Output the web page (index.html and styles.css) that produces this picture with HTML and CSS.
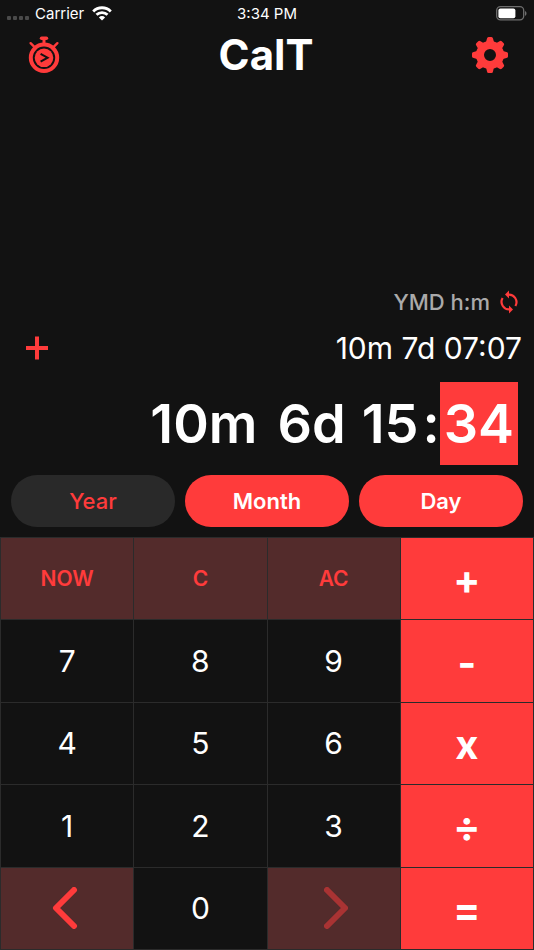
FILE: index.html
```html
<!DOCTYPE html>
<html lang="en">
<head>
  <meta charset="UTF-8">
  <title>CalT</title>
  <meta name="viewport" content="width=device-width, initial-scale=1.0">
  <link rel="stylesheet" href="styles.css">
</head>
<body>
  <!-- status bar -->
  <div class="status-bar">
    <div class="status-left">
      <span class="signal"><i></i><i></i><i></i><i></i></span>
      <span>Carrier</span>
      <svg class="wifi" viewBox="0 0 20 16" width="20" height="16" fill="none" stroke="#fff" stroke-width="2.8">
        <path d="M1.2 6.4a12.4 12.4 0 0 1 17.6 0"/>
        <path d="M4.5 9.8a7.8 7.8 0 0 1 11 0"/>
        <path d="M10 15.4L6.9 12.4a4.4 4.4 0 0 1 6.2 0z" fill="#fff" stroke="none"/>
      </svg>
    </div>
    <span>3:34 PM</span>
    <div class="status-right">
      <svg viewBox="0 0 31 15" width="31" height="15">
        <rect x="0.7" y="0.7" width="27" height="13.2" rx="3.8" fill="none" stroke="#6e6e6e" stroke-width="1.3"/>
        <rect x="2.4" y="2.4" width="17" height="9.8" rx="2" fill="#fff"/>
        <path d="M29 5v4.8c2-.8 2-4 0-4.8z" fill="#6e6e6e"/>
      </svg>
    </div>
  </div>

  <header class="header">
    <button class="icon-btn" aria-label="Stopwatch">
      <svg viewBox="0 0 32 38" width="32" height="38" fill="none" stroke="#ff3b3b">
        <path d="M16 3v5" stroke-width="3"/>
        <path d="M13.6 2.2h4.8" stroke-width="3.6" stroke-linecap="round"/>
        <path d="M2.6 7.2l4 4M29.4 7.2l-4 4" stroke-width="2.4" stroke-linecap="round"/>
        <circle cx="16" cy="21.8" r="13.2" stroke-width="4"/>
        <circle cx="16" cy="21.8" r="9.3" fill="#ff3b3b" stroke="none"/>
        <path d="M12.6 17.8l7 3.9-7 3.9" stroke="#121212" stroke-width="2"/>
      </svg>
    </button>
    <h1>CalT</h1>
    <button class="icon-btn" aria-label="Settings">
      <svg viewBox="0 0 36 36" width="36" height="36">
        <g fill="#ff3b3b">
          <path id="tooth" d="M12 7.4q2.6-1.8 3-5.8q.2-1.6 1.6-1.6h2.8q1.4 0 1.6 1.6q.4 4 3 5.8z"/>
          <use href="#tooth" transform="rotate(45 18 18)"/>
          <use href="#tooth" transform="rotate(90 18 18)"/>
          <use href="#tooth" transform="rotate(135 18 18)"/>
          <use href="#tooth" transform="rotate(180 18 18)"/>
          <use href="#tooth" transform="rotate(225 18 18)"/>
          <use href="#tooth" transform="rotate(270 18 18)"/>
          <use href="#tooth" transform="rotate(315 18 18)"/>
        </g>
        <circle cx="18" cy="18" r="10" fill="none" stroke="#ff3b3b" stroke-width="8"/>
      </svg>
    </button>
  </header>

  <main class="display">
    <div class="format">
      <span>YMD h:m</span>
      <button class="icon-btn" aria-label="Change format">
        <svg viewBox="0 0 18 24" width="18" height="24" fill="none" stroke="#ff3b3b" stroke-width="2.2">
          <path d="M8 4.6a7.6 7.6 0 0 1 7.4 11.4M10 19.4a7.6 7.6 0 0 1-7.4-11.4"/>
          <path d="M9 0.6v8L5 4.6zM9 15.4v8l4-4z" fill="#ff3b3b" stroke="none"/>
        </svg>
      </button>
    </div>
    <div class="operand">
      <svg viewBox="0 0 24 24" width="24" height="24" stroke="#ff3b3b" stroke-width="4">
        <path d="M12 0.5v23M1 12h22"/>
      </svg>
      <span>10m 7d 07:07</span>
    </div>
    <div class="entry">
      <span class="month">10m</span>
      <span class="day">6d</span>
      <span>15</span>
      <span class="colon">:</span>
      <span class="active">34</span>
    </div>
  </main>

  <div class="units">
    <button class="off">Year</button>
    <button>Month</button>
    <button>Day</button>
  </div>

  <div class="keypad">
    <button class="fn">NOW</button>
    <button class="fn">C</button>
    <button class="fn">AC</button>
    <button class="op">+</button>

    <button>7</button>
    <button>8</button>
    <button>9</button>
    <button class="op">-</button>

    <button>4</button>
    <button>5</button>
    <button>6</button>
    <button class="op">x</button>

    <button>1</button>
    <button>2</button>
    <button>3</button>
    <button class="op">÷</button>

    <button class="fn" aria-label="Previous">
      <svg viewBox="0 0 30 42" width="30" height="42">
        <path d="M22 3L4 21l18 18"/>
      </svg>
    </button>
    <button>0</button>
    <button class="fn" aria-label="Next" disabled>
      <svg viewBox="0 0 30 42" width="30" height="42">
        <path d="M8 3l18 18L8 39"/>
      </svg>
    </button>
    <button class="op">=</button>
  </div>
</body>
</html>
```

FILE: styles.css
```css
* {
  box-sizing: border-box;
}
body {
  display: flex;
  flex-direction: column;
  min-height: 100vh;
  margin: 0;
  background: #121212;
  color: #fff;
  font-family: Inter, "Liberation Sans", sans-serif;
}
button {
  padding: 0;
  border: none;
  background: none;
  color: inherit;
  font: inherit;
  cursor: pointer;
}
svg {
  display: block;
}

/* status bar */
.status-bar {
  display: grid;
  grid-template-columns: 1fr auto 1fr;
  align-items: center;
  height: 26px;
  padding: 0 7px;
  font-size: 15px;
}
.status-left {
  display: flex;
  align-items: center;
  gap: 6px;
}
.wifi {
  margin-left: 2px;
}
.signal {
  display: flex;
  gap: 2px;
  padding-top: 9px;
}
.signal i {
  width: 4px;
  height: 4px;
  border-radius: 1px;
  background: #4a4a4a;
}
.status-right {
  justify-self: end;
}

.header {
  display: flex;
  align-items: center;
  justify-content: space-between;
  height: 58px;
  padding: 0 26px 0 28px;
}
.header h1 {
  margin: 0;
  font-size: 42px;
  font-weight: 700;
  line-height: 50px;
}

/* values */
.display {
  flex: 1;
  display: flex;
  flex-direction: column;
  justify-content: flex-end;
  padding-left: 25px;
}
.format {
  display: flex;
  align-items: center;
  justify-content: flex-end;
  gap: 10px;
  padding-right: 16px;
  color: #aaa;
  font-size: 22px;
  font-weight: 500;
  line-height: 28px;
}
.operand {
  display: flex;
  align-items: center;
  justify-content: space-between;
  height: 64px;
  padding-right: 12px;
  font-size: 30px;
}
.entry {
  display: flex;
  justify-content: flex-end;
  margin: 2px 16px 10px 0;
  font-size: 54px;
  font-weight: 600;
  line-height: 83px;
}
.month {
  margin-right: 20px;
}
.day {
  margin-right: 16px;
}
.colon {
  padding-left: 4px;
}
.active {
  padding: 0 4px;
  background: #ff3b3b;
}

.units {
  display: flex;
  gap: 10px;
  padding: 0 11px 10px;
}
.units button {
  flex: 1;
  height: 52px;
  border-radius: 26px;
  background: #ff3b3b;
  font-size: 22px;
  font-weight: 600;
}
.units .off {
  background: #292929;
  color: #ff3b3b;
  font-weight: 500;
}

/* keys */
.keypad {
  display: grid;
  grid-template-columns: repeat(4, 1fr);
  grid-auto-rows: 1fr;
  gap: 1px;
  min-height: 413px;
  padding: 1px;
  background: #2b2b2b;
}
.keypad button {
  display: flex;
  align-items: center;
  justify-content: center;
  background: #121212;
  font-size: 30px;
}
.keypad .fn {
  background: #532b2b;
  color: #ff3b3b;
  font-size: 21px;
  font-weight: 600;
}
.keypad .op {
  padding-top: 2px;
  background: #ff3b3b;
  font-size: 40px;
  font-weight: 700;
}
.fn svg {
  fill: none;
  stroke: #ff3b3b;
  stroke-width: 6;
  stroke-linecap: round;
  stroke-linejoin: round;
}
.fn:disabled svg {
  opacity: 0.5;
}
```
